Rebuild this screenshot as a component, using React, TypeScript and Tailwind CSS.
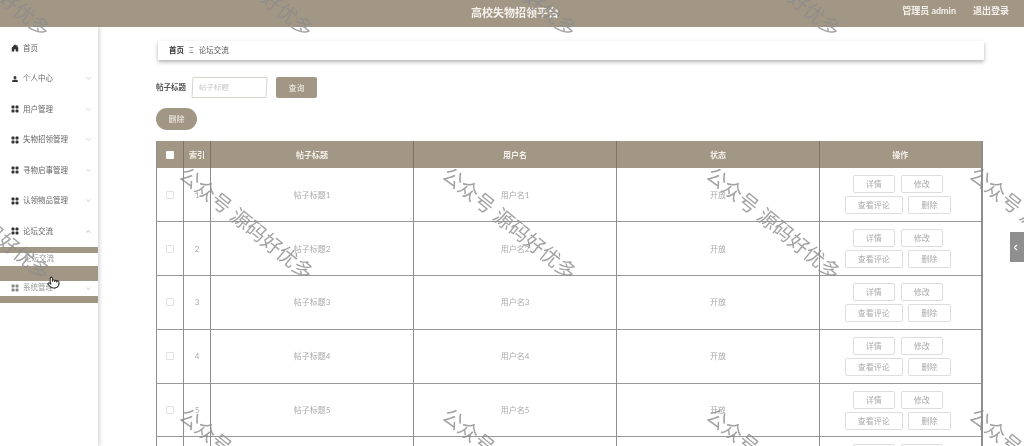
import { BsGridFill, BsHouseDoorFill, BsPersonFill } from "react-icons/bs";
import { ChevronDown, ChevronLeft, ChevronUp, Pointer } from "lucide-react";

const menu = [
  { label: "个人中心", icon: "person" },
  { label: "用户管理", icon: "grid" },
  { label: "失物招领管理", icon: "grid" },
  { label: "寻物启事管理", icon: "grid" },
  { label: "认领物品管理", icon: "grid" },
];

const rows = [1, 2, 3, 4, 5, 6];
const markCols = [-16, 247, 510, 774, 1037];
const markRows = [-20, 223, 464];

function RowButton({ label, className }: { label: string; className: string }) {
  return (
    <button className={`h-[18px] rounded-[2px] border border-[#dddddd] bg-white text-[8px] leading-none text-[#aaaaaa] ${className}`}>
      {label}
    </button>
  );
}

function Watermarks() {
  return (
    <>
      {markRows.map((y) =>
        markCols.map((x) => (
          <div
            key={`${x}-${y}`}
            className="pointer-events-none absolute w-[190px] -translate-x-1/2 -translate-y-1/2 rotate-[39deg] whitespace-nowrap text-center text-[20px] leading-none text-[#8c8c8c]/80"
            style={{ left: x, top: y }}
          >
            公众号 源码好优多
          </div>
        )),
      )}
    </>
  );
}

export default function App() {
  return (
    <div className="relative h-[446px] w-[1024px] overflow-hidden bg-white font-['Lato','Noto_Sans_CJK_SC',sans-serif] blur-[0.4px]">
      <header className="relative flex h-[27px] items-center bg-[#a29684] pl-[6px] text-white">
        <h1 className="w-full text-center text-[11px] font-bold text-[#f4f1ec]">高校失物招领平台</h1>
        <div className="absolute right-[15px] top-[5px] flex gap-[17px] text-[9px] font-bold leading-[12px] text-[#f4f1ec]">
          <span>管理员 admin</span>
          <span>退出登录</span>
        </div>
      </header>

      <div className="flex h-[419px]">
        <aside className="h-full w-[98px] shrink-0 bg-white pt-[6px] text-[7.5px] shadow-[2px_0_4px_rgba(0,0,0,0.15)]">
          <div className="flex h-[30.5px] items-center pl-[11px] text-[#666666]">
            <BsHouseDoorFill className="mr-[4px] size-[8px] text-[#333333]" />
            首页
          </div>
          {menu.map((item) => (
            <div key={item.label} className="flex h-[30.5px] items-center pl-[11px] text-[#666666]">
              {item.icon === "person" ? (
                <BsPersonFill className="mr-[4px] size-[8px] text-[#333333]" />
              ) : (
                <BsGridFill className="mr-[4px] size-[8px] text-[#333333]" />
              )}
              <span className="flex-1">{item.label}</span>
              <ChevronDown className="mr-[6px] size-[7px] text-[#aaaaaa]" />
            </div>
          ))}
          <div className="flex h-[30.5px] items-center pl-[11px] text-[#666666]">
            <BsGridFill className="mr-[4px] size-[8px] text-[#333333]" />
            <span className="flex-1">论坛交流</span>
            <ChevronUp className="mr-[6px] size-[7px] text-[#888888]" />
          </div>
          <div className="h-[6px] bg-[#a29684]" />
          <div className="flex h-[13px] items-center pl-[24px] text-[#999999]">论坛交流</div>
          <div className="h-[15px] bg-[#a29684]" />
          <div className="flex h-[15px] items-center pl-[11px] text-[#999999]">
            <BsGridFill className="mr-[4px] size-[8px] text-[#888888]" />
            <span className="flex-1">系统管理</span>
            <ChevronDown className="mr-[6px] size-[7px] text-[#aaaaaa]" />
          </div>
          <div className="h-[7px] bg-[#a29684]" />
        </aside>

        <main className="flex-1 pl-[58px] pt-[14px]">
          <div className="ml-[2px] flex h-[19px] w-[826px] items-center pl-[11px] text-[7.5px] text-[#555555] shadow-[0_2px_4px_rgba(0,0,0,0.3)]">
            <span className="font-bold text-[#333333]">首页</span>
            <span className="mx-[5px] text-[#777777]">Ξ</span>
            <span>论坛交流</span>
          </div>

          <div className="mt-[17px] flex h-[21px] items-center">
            <span className="w-[36px] text-[7.5px] font-bold text-[#555555]">帖子标题</span>
            <div className="flex h-[21px] w-[75px] -skew-x-[3deg] items-center rounded-[1px] border border-[#d8d4ce] pl-[6px] text-[7.5px] text-[#c4c4c4]">
              帖子标题
            </div>
            <button className="ml-[9px] h-[21px] w-[41px] rounded-[2px] bg-[#a29684] text-[8px] text-[#f4f1ec]">查询</button>
          </div>

          <button className="mt-[10px] block h-[22px] w-[41px] rounded-full bg-[#a29684] text-[8px] text-[#f4f1ec]">删除</button>

          <table className="mt-[11px] w-[825px] table-fixed border-collapse border-r-2 border-l border-[#8e8e8e]">
            <colgroup>
              <col className="w-[27px]" />
              <col className="w-[27px]" />
              <col className="w-[203px]" />
              <col className="w-[203px]" />
              <col className="w-[203px]" />
              <col className="w-[162px]" />
            </colgroup>
            <thead>
              <tr className="h-[27px] bg-[#a29684] text-[8px] font-bold text-[#f4f1ec]">
                <th className="border-r border-[#7d7466] p-0">
                  <span className="mx-auto block size-[8px] rounded-[1px] bg-white" />
                </th>
                <th className="border-r border-[#7d7466] p-0">索引</th>
                <th className="border-r border-[#7d7466] p-0">帖子标题</th>
                <th className="border-r border-[#7d7466] p-0">用户名</th>
                <th className="border-r border-[#7d7466] p-0">状态</th>
                <th className="p-0">操作</th>
              </tr>
            </thead>
            <tbody>
              {rows.map((n) => (
                <tr key={n} className="h-[53.8px] border-b border-[#999999] text-center text-[8px] text-[#aaaaaa]">
                  <td className="border-r border-[#8e8e8e] p-0">
                    <span className="mx-auto block size-[8px] rounded-[1px] border border-[#e2e2e2]" />
                  </td>
                  <td className="border-r border-[#8e8e8e] p-0">{n}</td>
                  <td className="border-r border-[#8e8e8e] p-0">帖子标题{n}</td>
                  <td className="border-r border-[#8e8e8e] p-0">用户名{n}</td>
                  <td className="border-r border-[#8e8e8e] p-0">开放</td>
                  <td className="p-0">
                    <div className="flex flex-col items-center gap-[3px] pr-[5px]">
                      <div className="flex gap-[6px]">
                        <RowButton label="详情" className="w-[42px]" />
                        <RowButton label="修改" className="w-[42px]" />
                      </div>
                      <div className="flex gap-[5px]">
                        <RowButton label="查看评论" className="w-[58px]" />
                        <RowButton label="删除" className="w-[43px]" />
                      </div>
                    </div>
                  </td>
                </tr>
              ))}
            </tbody>
          </table>
        </main>
      </div>

      <Watermarks />

      <div className="absolute right-0 top-[232px] flex h-[30px] w-[14px] items-center justify-start bg-[#8f8f8f] pl-[1px]">
        <ChevronLeft className="size-[9px] text-white" strokeWidth={3} />
      </div>
      <Pointer className="absolute left-[47px] top-[276px] size-[13px] fill-white text-[#333333]" />
    </div>
  );
}
